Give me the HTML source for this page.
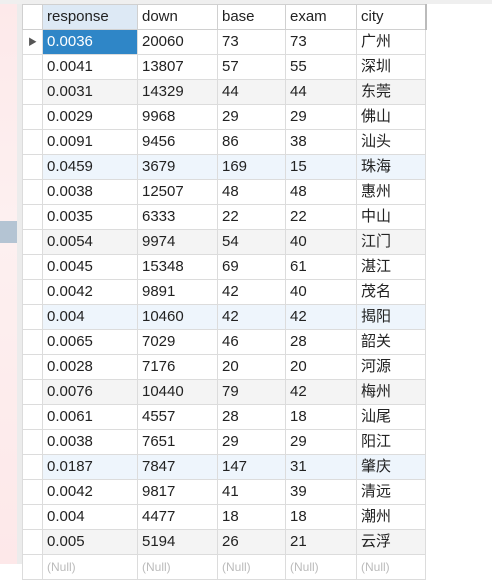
<!DOCTYPE html>
<html><head><meta charset="utf-8"><style>
body{margin:0;width:492px;height:564px;overflow:hidden;background:#fff;font-family:"Liberation Sans","Noto Sans CJK SC",sans-serif;font-size:15px;color:#222;position:relative}
.a{position:absolute}
table{position:absolute;left:22px;top:4px;border-collapse:collapse;table-layout:fixed}
td{height:24px;border:1px solid #dcdcdc;padding:0 0 0 4px;white-space:nowrap;overflow:hidden;line-height:24px}
tr.h td{border-color:#d0d0d0}
td.rh{padding:0;background:#fff}
tr.g td{background:#f4f4f4}
tr.b td{background:#eef5fc}
tr.g td.rh,tr.b td.rh{background:#fff}
</style></head><body>
<div class="a" style="left:0;top:0;width:492px;height:4px;background:#efefef"></div>
<div class="a" style="left:0;top:4px;width:17px;height:560px;background:linear-gradient(#fde9ea,#fdf0f0 40%,#fde8e9)"></div>
<div class="a" style="left:17px;top:4px;width:5px;height:560px;background:#ececec"></div>
<div class="a" style="left:0;top:221px;width:17px;height:22px;background:#b4c4d3"></div>
<table>
<colgroup><col style="width:20px"><col style="width:95px"><col style="width:80px"><col style="width:68px"><col style="width:71px"><col style="width:69px"></colgroup>
<tr class="h"><td class="rh"></td><td style="background:#dde9f5">response</td><td>down</td><td>base</td><td>exam</td><td style="border-right:2px solid #bbb">city</td></tr>
<tr><td class="rh" style="background:#fff;color:#555;font-size:9px;text-align:center">▶</td><td style="background:#2f86c7;color:#fff">0.0036</td><td>20060</td><td>73</td><td>73</td><td>广州</td></tr>
<tr><td class="rh"></td><td>0.0041</td><td>13807</td><td>57</td><td>55</td><td>深圳</td></tr>
<tr class="g"><td class="rh"></td><td>0.0031</td><td>14329</td><td>44</td><td>44</td><td>东莞</td></tr>
<tr><td class="rh"></td><td>0.0029</td><td>9968</td><td>29</td><td>29</td><td>佛山</td></tr>
<tr><td class="rh"></td><td>0.0091</td><td>9456</td><td>86</td><td>38</td><td>汕头</td></tr>
<tr class="b"><td class="rh"></td><td>0.0459</td><td>3679</td><td>169</td><td>15</td><td>珠海</td></tr>
<tr><td class="rh"></td><td>0.0038</td><td>12507</td><td>48</td><td>48</td><td>惠州</td></tr>
<tr><td class="rh"></td><td>0.0035</td><td>6333</td><td>22</td><td>22</td><td>中山</td></tr>
<tr class="g"><td class="rh"></td><td>0.0054</td><td>9974</td><td>54</td><td>40</td><td>江门</td></tr>
<tr><td class="rh"></td><td>0.0045</td><td>15348</td><td>69</td><td>61</td><td>湛江</td></tr>
<tr><td class="rh"></td><td>0.0042</td><td>9891</td><td>42</td><td>40</td><td>茂名</td></tr>
<tr class="b"><td class="rh"></td><td>0.004</td><td>10460</td><td>42</td><td>42</td><td>揭阳</td></tr>
<tr><td class="rh"></td><td>0.0065</td><td>7029</td><td>46</td><td>28</td><td>韶关</td></tr>
<tr><td class="rh"></td><td>0.0028</td><td>7176</td><td>20</td><td>20</td><td>河源</td></tr>
<tr class="g"><td class="rh"></td><td>0.0076</td><td>10440</td><td>79</td><td>42</td><td>梅州</td></tr>
<tr><td class="rh"></td><td>0.0061</td><td>4557</td><td>28</td><td>18</td><td>汕尾</td></tr>
<tr><td class="rh"></td><td>0.0038</td><td>7651</td><td>29</td><td>29</td><td>阳江</td></tr>
<tr class="b"><td class="rh"></td><td>0.0187</td><td>7847</td><td>147</td><td>31</td><td>肇庆</td></tr>
<tr><td class="rh"></td><td>0.0042</td><td>9817</td><td>41</td><td>39</td><td>清远</td></tr>
<tr><td class="rh"></td><td>0.004</td><td>4477</td><td>18</td><td>18</td><td>潮州</td></tr>
<tr class="g"><td class="rh"></td><td>0.005</td><td>5194</td><td>26</td><td>21</td><td>云浮</td></tr>
<tr style="color:#bbb;font-size:12px"><td class="rh"></td><td>(Null)</td><td>(Null)</td><td>(Null)</td><td>(Null)</td><td>(Null)</td></tr>
</table>
</body></html>
